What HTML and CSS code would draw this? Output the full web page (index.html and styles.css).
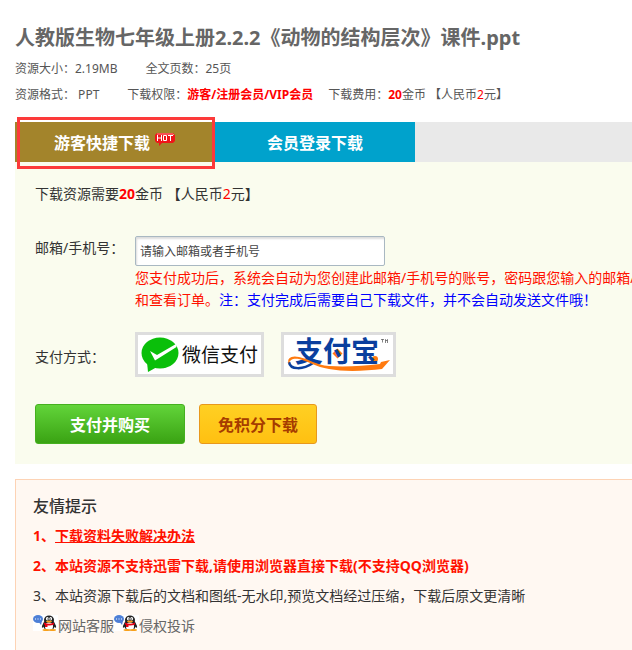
FILE: index.html
```html
<!DOCTYPE html>
<html lang="zh-CN">

<head>
  <meta charset="UTF-8">
  <meta name="viewport" content="width=device-width, initial-scale=1.0">
  <title>人教版生物七年级上册2.2.2《动物的结构层次》课件.ppt</title>
  <link rel="stylesheet" href="styles.css">
</head>

<body>
  <svg class="defs" aria-hidden="true">
    <symbol id="qq" viewBox="0 0 25 16">
      <rect width="25" height="16" fill="#fff"/>
      <ellipse cx="5" cy="4" rx="5" ry="4" fill="#4d7fd6"/>
      <path d="M5 6l3 4 1-4z" fill="#4d7fd6"/>
      <path d="M2 4h1M4.500 4h1M7 4h1" stroke="#fff"/>
      <path d="M11 8c-1.500 1-2.500 3.500-2 5l2.500-2zM21 8c1.500 1 2.500 3.500 2 5l-2.500-2z" fill="#222"/>
      <ellipse cx="16" cy="10" rx="6" ry="5.500" fill="#222"/>
      <ellipse cx="16" cy="5" rx="5" ry="4.500" fill="#222"/>
      <ellipse cx="16" cy="11.500" rx="4" ry="4" fill="#fff"/>
      <ellipse cx="14.300" cy="3.800" rx="1.400" ry="1.800" fill="#fff"/>
      <ellipse cx="17.700" cy="3.800" rx="1.400" ry="1.800" fill="#fff"/>
      <path d="M14.300 4h1M17 4h1" stroke="#222"/>
      <ellipse cx="16" cy="6.500" rx="3" ry="1" fill="#f9a11b"/>
      <path d="M11 7.500q5 2.500 10 0v2q-5 2-10 0z" fill="#e60012"/>
      <path d="M12 9h2.500v3H12z" fill="#e60012"/>
      <ellipse cx="13" cy="15" rx="3.500" ry="1" fill="#f9a11b"/>
      <ellipse cx="19.500" cy="15" rx="3.500" ry="1" fill="#f9a11b"/>
    </symbol>
  </svg>

  <div class="header">
    <h1>人教版生物七年级上册2.2.2《动物的结构层次》课件.ppt</h1>
    <div class="info">
      <span class="size">资源大小：2.19MB</span>
      <span>全文页数：25页</span>
    </div>
    <div class="info">
      <span class="size">资源格式： PPT</span>
      <span class="right">下载权限：<b>游客/注册会员/VIP会员</b></span>
      <span>下载费用：<b>20</b>金币 【人民币<i>2</i>元】</span>
    </div>
  </div>

  <div class="tabs">
    <button type="button" class="tab active">游客快捷下载
      <svg class="hot" width="22" height="13" viewBox="0 0 22 13">
        <path d="M3 0h16l2 2v6l-2 2H8l-3 3V10H3L1 8V2z" fill="#f01418"/>
        <path d="M3 1h16l1 1" fill="none" stroke="#ff8a8a"/>
        <path d="M3.500 2v6M7.500 2v6M3.500 5h4M9.500 2.500h3v5h-3zM14 2.500h5M16.500 3v5" fill="none" stroke="#fff"/>
      </svg>
    </button>
    <button type="button" class="tab">会员登录下载</button>
  </div>

  <form class="panel">
    <p class="cost">下载资源需要<b>20</b>金币 【人民币<i>2</i>元】</p>
    <div class="row">
      <label class="name" for="account">邮箱/手机号：</label>
      <div class="field">
        <input type="text" id="account" class="txt" placeholder="请输入邮箱或者手机号">
        <p class="note">您支付成功后，系统会自动为您创建此邮箱/手机号的账号，密码跟您输入的邮箱/<br>和查看订单。<span>注：支付完成后需要自己下载文件，并不会自动发送文件哦！</span></p>
      </div>
    </div>
    <div class="row pay">
      <span class="name">支付方式：</span>
      <button type="button" class="logo">
        <svg width="123" height="39" viewBox="0 0 123 39">
          <ellipse cx="22" cy="18" rx="18.500" ry="15.500" fill="#0abf0a"/>
          <path d="M9 27l1 10 9-5z" fill="#0abf0a"/>
          <path d="M12 16l7 4L38 9 38.500 12 17 25.500z" fill="#fff"/>
          <text class="wechat" x="44" y="27">微信支付</text>
        </svg>
      </button>
      <button type="button" class="logo">
        <svg width="109" height="39" viewBox="0 0 109 39">
          <path d="M5 27c1 8 14 8 24 1" fill="none" stroke="#0a3f9e" stroke-width="2.500"/>
          <path d="M53.500 13.500l5 5-5 5-5-5z" fill="#ff7a0f"/>
          <circle cx="91" cy="24" r="3" fill="#ff7a0f"/>
          <text class="alipay" x="11" y="27">支付宝</text>
          <path d="M5 29C2 23 8 20 15 22c10 2 17 8 30 9 17 1 34 0 51-2l1-2 9-2-8 9c-16 2-38 3-53 0C32 32 24 26 15 24c-6-1-10 1-10 5z" fill="#ff7a0f"/>
          <path d="M97 4.500h3M98.500 4.500v3M101.500 8V4.500l1 1.500 1-1.500V8" fill="none" stroke="#333" stroke-width=".6"/>
        </svg>
      </button>
    </div>
    <div class="btns">
      <button type="submit" class="btn buy">支付并购买</button>
      <button type="button" class="btn free">免积分下载</button>
    </div>
  </form>

  <div class="tips">
    <h2>友情提示</h2>
    <p class="red">1、<a href="#">下载资料失败解决办法</a></p>
    <p class="red">2、本站资源不支持迅雷下载,请使用浏览器直接下载(不支持QQ浏览器)</p>
    <p>3、本站资源下载后的文档和图纸-无水印,预览文档经过压缩，下载后原文更清晰</p>
    <p class="service">
      <a href="#"><svg width="25" height="16"><use href="#qq"/></svg>网站客服</a>
      <a href="#"><svg width="25" height="16"><use href="#qq"/></svg>侵权投诉</a>
    </p>
  </div>
</body>

</html>
```

FILE: styles.css
```css
* {
  margin: 0px;
  padding: 0px;
  box-sizing: border-box;
}
body {
  font-family: "Noto Sans", "Noto Sans CJK SC", sans-serif;
  font-size: 14px;
  color: #333;
  background-color: #fff;
  padding: 20px 0 0 15px;
  overflow-x: hidden;
}
button, input {
  font-family: inherit;
}
button {
  border: none;
  cursor: pointer;
}
b, i {
  color: #f00;
}
i {
  font-style: normal;
}
.defs {
  display: none;
}
.header {
  color: #555;
  padding-bottom: 14px;
  white-space: nowrap;
}
h1 {
  font-size: 20px;
  line-height: 36px;
  color: #666;
}
.info {
  display: flex;
  font-size: 12px;
  line-height: 26px;
}
.info .size {
  margin-right: 28px;
}
.info .right {
  margin-right: 15px;
}
.tabs {
  display: flex;
  height: 40px;
  background-color: #e9e9e9;
}
.tab {
  position: relative;
  display: flex;
  justify-content: center;
  align-items: center;
  gap: 4px;
  width: 200px;
  font-size: 16px;
  font-weight: bold;
  color: #fff;
  background-color: #00a2cc;
}
.tab.active {
  background-color: #a3842b;
}
.tab.active::after {
  content: "";
  position: absolute;
  top: -5px;
  right: 0;
  bottom: -7px;
  left: 2px;
  border: 3px solid #fc3a3a;
  z-index: 1;
}
.hot {
  margin-bottom: 6px;
}
.panel {
  background-color: #fafcee;
  padding: 20px 0 20px 20px;
  white-space: nowrap;
}
.cost {
  line-height: 24px;
  margin-bottom: 30px;
}
.row {
  display: flex;
}
.name {
  flex-shrink: 0;
  width: 100px;
  line-height: 24px;
}
.txt {
  display: block;
  width: 250px;
  height: 30px;
  padding: 0 4px;
  font-size: 12px;
  border: 1px solid #a9b8c2;
  border-radius: 2px;
  box-shadow: inset 1px 2px 2px #ddd;
  background-color: #fff;
}
.txt::placeholder {
  color: #444;
}
.note {
  padding-top: 1px;
  line-height: 22px;
  color: #f10;
}
.note span {
  color: #00f;
}
.pay {
  align-items: center;
  margin: 21px 0 27px;
}
.pay .name {
  padding-top: 4px;
}
.logo {
  display: flex;
  margin-right: 17px;
  border: 3px solid #ddd;
  background-color: #fff;
}
.wechat {
  font-size: 19px;
  fill: #111;
}
.alipay {
  font-size: 28px;
  font-weight: bold;
  fill: #0a3f9e;
}
.btns {
  display: flex;
  gap: 14px;
}
.btn {
  height: 40px;
  font-size: 16px;
  font-weight: bold;
  border-radius: 3px;
}
.buy {
  width: 150px;
  color: #fff;
  border: 1px solid #45b01f;
  background: linear-gradient(#62d43a, #3aa313);
}
.free {
  width: 118px;
  color: #a63c00;
  border: 1px solid #e8981c;
  background: linear-gradient(#ffd023, #ffc011);
}
.tips {
  margin-top: 15px;
  padding: 11px 0 20px 17px;
  line-height: 30px;
  border: 1px solid #fdd3b5;
  border-right: none;
  background-color: #fff8f2;
  white-space: nowrap;
}
h2 {
  font-size: 16px;
  font-weight: 500;
}
.red, .red a {
  font-weight: bold;
  color: #f10;
}
.service {
  display: flex;
}
.service a {
  display: flex;
  align-items: center;
  color: #666;
  text-decoration: none;
}
.service svg {
  margin-bottom: 6px;
}
```
